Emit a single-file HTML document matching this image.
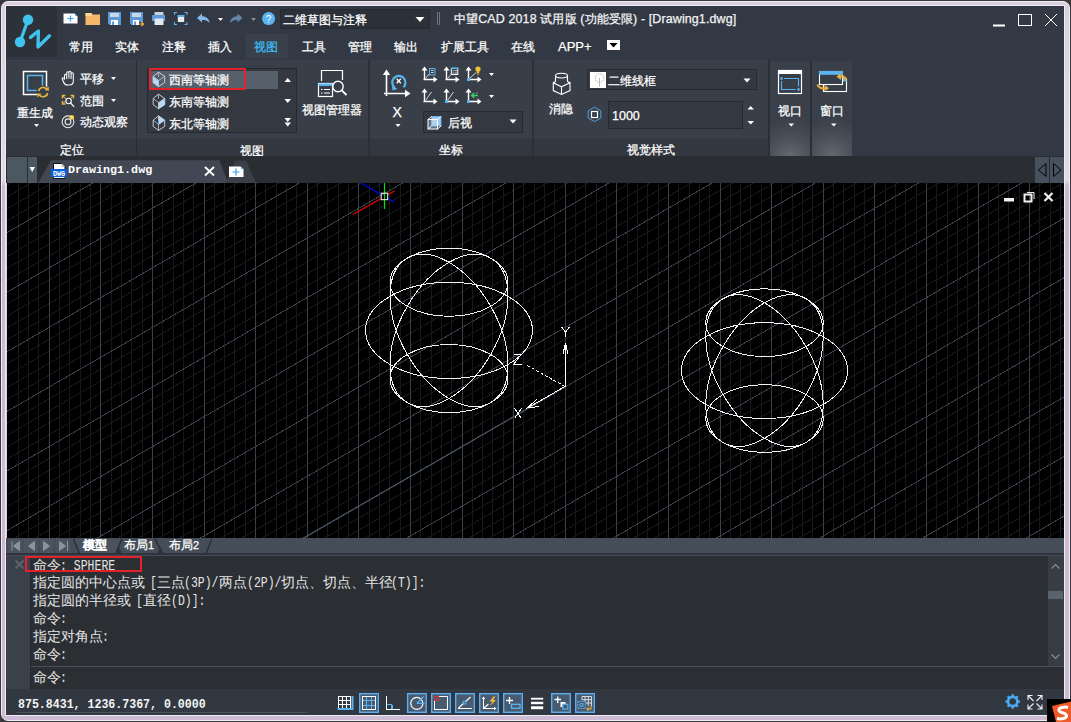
<!DOCTYPE html>
<html><head><meta charset="utf-8">
<style>
*{margin:0;padding:0;box-sizing:border-box}
html,body{width:1071px;height:722px;overflow:hidden;background:#1e1e22;font-family:"Liberation Sans",sans-serif;color:#fff;position:relative}
.a{position:absolute}
.t{position:absolute;white-space:nowrap;font-size:12px;line-height:14px;color:#fff;-webkit-text-stroke:0.25px currentColor}
svg{position:absolute;overflow:visible}
.m{font-family:"Liberation Mono",monospace}
</style></head><body>
<!-- frame -->
<div class="a" style="left:0;top:0;width:1071px;height:722px;background:#3a3a3e"></div>
<div class="a" style="left:1px;top:1px;width:1069px;height:720px;background:linear-gradient(#d9d1e0 0,#e2dbe8 178px,#cdb9d5 184px,#cdbad5 100%);border-radius:7px;border:1px solid #f2ecf4"></div>
<div class="a" style="left:5px;top:5px;width:1060px;height:711px;border:1px solid #f0eaf2"></div>
<div class="a" style="left:6px;top:6px;width:1058px;height:709px;background:#333944"></div>

<!-- ===== TITLE ROW ===== -->
<div class="a" style="left:6px;top:6px;width:51px;height:51px;background:#2d3139"></div>
<svg style="left:0;top:0" width="60" height="60">
  <g fill="#40c4ee" stroke="#40c4ee">
    <circle cx="28" cy="19.7" r="5.2" stroke="none"/>
    <circle cx="20" cy="42" r="5.2" stroke="none"/>
    <path d="M28 20 L20 42" stroke-width="3.2" fill="none"/>
    <path d="M30.5 37.4 L38.4 31 L38 47 L49.5 35.8" stroke-width="3.3" fill="none" stroke-linejoin="round" stroke-linecap="round"/>
  </g>
</svg>
<!-- QAT icons -->
<svg style="left:0;top:0" width="290" height="34">
  <path d="M63.5 13.5 H74.5 L77.5 16.5 V23.5 H63.5 Z" fill="#fff"/>
  <path d="M75 13.5 L77.5 16 L75 16 Z" fill="#5ab0f0"/>
  <path d="M70.5 15.5 V21.5 M67.5 18.5 H73.5" stroke="#3aa0ea" stroke-width="1.2"/>
  <path d="M85.5 13 H91.5 L92.5 14.5 H100 V25 H85.5 Z" fill="#f4b76c"/>
  <path d="M85.5 13 H91 L92 14.5 V16 H85.5 Z" fill="#f7d898"/>
  <path d="M108 12 H121 V25 H109.5 L108 23.5 Z" fill="#5d9ad6"/>
  <rect x="110" y="13" width="9" height="4" fill="#c8d7ea"/>
  <rect x="111" y="20" width="7" height="5" fill="#fff"/>
  <rect x="112" y="21.5" width="2" height="3.5" fill="#5d9ad6"/>
  <path d="M130 12 H143 V22 H139 V25 H131.5 L130 23.5 Z" fill="#5d9ad6"/>
  <rect x="132" y="13" width="9" height="4" fill="#c8d7ea"/>
  <rect x="133" y="20" width="6" height="5" fill="#fff"/>
  <rect x="134" y="21.5" width="2" height="3.5" fill="#5d9ad6"/>
  <path d="M138.5 24 H143.5 M141.5 22 L143.5 24 L141.5 26" stroke="#f0b040" stroke-width="1.2" fill="none"/>
  <rect x="154.5" y="12" width="9" height="3.5" fill="#c8d2dc"/>
  <rect x="152" y="15" width="13" height="6" fill="#5d9ad6"/>
  <rect x="154.5" y="18.5" width="9" height="6.5" fill="#e2e8f0"/>
  <path d="M174.5 15 V12.5 H177 M184.5 12.5 H187 V15 M187 22 V24.5 H184.5 M177 24.5 H174.5 V22" stroke="#5ab0f0" stroke-width="1.1" fill="none"/>
  <rect x="177.5" y="15" width="7" height="2" fill="#5ab0f0"/>
  <rect x="177.8" y="17" width="6.4" height="5" fill="#e6ecf2"/>
  <path d="M197 18 L202 13.5 V16.3 C206 16.3 209 18.5 209.5 23 C207.5 20.5 205 20 202 20 V22.5 Z" fill="#84b8e8"/>
  <path d="M218 18 H223 L220.5 21 Z" fill="#fff"/>
  <path d="M242.5 18 L237.5 13.5 V16.3 C233.5 16.3 230.5 18.5 230 23 C232 20.5 234.5 20 237.5 20 V22.5 Z" fill="#5f86ad"/>
  <path d="M251 18 H256 L253.5 21 Z" fill="#8a8f96"/>
  <circle cx="268.6" cy="18.6" r="6.5" fill="#5ab4f0"/>
  <text x="268.6" y="22.6" font-size="10" font-family="Liberation Sans" fill="#fff" text-anchor="middle">?</text>
</svg>
<div class="a" style="left:280px;top:9px;width:150px;height:20px;background:#2c3038;border:1px solid #262a31"></div>
<div class="t" style="left:283px;top:13px">二维草图与注释</div>
<svg style="left:0;top:0" width="440" height="30"><path d="M415.5 17 H424.5 L420 22 Z" fill="#fff"/></svg>
<div class="a" style="left:437px;top:12px;width:3px;height:13px;border:1px solid #70757c;border-radius:1px"></div>
<div class="t" style="left:454px;top:12px;font-size:12.45px;letter-spacing:0.13px;line-height:15px;color:#f4f4f4">中望CAD 2018 试用版 (功能受限) - [Drawing1.dwg]</div>
<svg style="left:0;top:0" width="1071" height="34">
  <rect x="993" y="24.5" width="12" height="2" fill="#fff"/>
  <rect x="1018.5" y="14.5" width="13" height="11" fill="none" stroke="#fff" stroke-width="1"/>
  <path d="M1045 14 L1057 26 M1057 14 L1045 26" stroke="#fff" stroke-width="1"/>
</svg>

<!-- ===== TABS ROW ===== -->
<div class="a" style="left:246px;top:34px;width:42px;height:24px;background:#39404a"></div>
<div class="t" style="left:69px;top:40px">常用</div>
<div class="t" style="left:115px;top:40px">实体</div>
<div class="t" style="left:162px;top:40px">注释</div>
<div class="t" style="left:208px;top:40px">插入</div>
<div class="t" style="left:254px;top:40px;color:#3ebdf2">视图</div>
<div class="t" style="left:302px;top:40px">工具</div>
<div class="t" style="left:348px;top:40px">管理</div>
<div class="t" style="left:394px;top:40px">输出</div>
<div class="t" style="left:441px;top:40px">扩展工具</div>
<div class="t" style="left:511px;top:40px">在线</div>
<div class="t" style="left:558px;top:40px;font-size:13px">APP+</div>
<div class="a" style="left:607px;top:40px;width:13px;height:10px;background:#fff"></div>
<svg style="left:0;top:0" width="630" height="60"><path d="M609.5 43 H617.5 L613.5 47.5 Z" fill="#000"/></svg>
<!-- ===== RIBBON ===== -->
<div class="a" style="left:6px;top:60px;width:763px;height:79px;background:#393f49"></div>
<div class="a" style="left:6px;top:139px;width:763px;height:17px;background:#323740"></div>
<div class="a" style="left:136px;top:60px;width:1px;height:96px;background:#2a2e34"></div>
<div class="a" style="left:368px;top:60px;width:2px;height:96px;background:#2c3037"></div>
<div class="a" style="left:532px;top:60px;width:2px;height:96px;background:#2c3037"></div>
<div class="a" style="left:770px;top:61px;width:40px;height:95px;background:radial-gradient(ellipse 40px 38px at 50% 100%,#636971 0,#4a5058 50%,#3a4049 100%)"></div>
<div class="a" style="left:812px;top:61px;width:40px;height:95px;background:radial-gradient(ellipse 40px 38px at 50% 100%,#636971 0,#4a5058 50%,#3a4049 100%)"></div>
<div class="a" style="left:810px;top:61px;width:2px;height:95px;background:#2b2f36"></div>
<div class="a" style="left:768px;top:60px;width:2px;height:96px;background:#2b2f36"></div>

<!-- panel 定位 -->
<svg style="left:0;top:0" width="140" height="160">
  <rect x="23.5" y="71.5" width="23" height="23" fill="none" stroke="#fff" stroke-width="1.5"/>
  <rect x="27.5" y="75.5" width="15" height="15" fill="none" stroke="#5ab4f0" stroke-width="1.5"/>
  <circle cx="43" cy="92" r="6.5" fill="#383e48"/>
  <path d="M38.6 91 A4.6 4.6 0 0 1 47 89.6" stroke="#e6b040" stroke-width="1.7" fill="none"/>
  <path d="M47.6 93 A4.6 4.6 0 0 1 39.2 94.6" stroke="#e6b040" stroke-width="1.7" fill="none"/>
  <path d="M44.5 90.2 L49 90.8 L48.6 86.5 Z" fill="#e6b040"/>
  <path d="M41.6 93.8 L37.2 93.2 L37.5 97.5 Z" fill="#e6b040"/>
  <path d="M34 124 H39 L36.5 127 Z" fill="#fff"/>
  <!-- hand -->
  <path d="M64.5 79.5 V75.5 Q64.5 74.3 65.6 74.3 Q66.7 74.3 66.7 75.5 V73 Q66.7 71.8 67.8 71.8 Q68.9 71.8 68.9 73 V72.5 Q68.9 71.3 70 71.3 Q71.1 71.3 71.1 72.5 V74 Q71.1 72.8 72.2 72.8 Q73.3 72.8 73.3 74 V81 Q73.3 85 69.5 85 H67.5 Q64.5 85 63.5 82 L62.3 79 Q62 77.8 63 77.8 Q63.8 77.8 64.5 79.5 Z M66.7 75.5 V79 M68.9 73 V78.5 M71.1 74 V79" fill="none" stroke="#fff" stroke-width="1.05"/>
  <path d="M111 77 H116 L113.5 80 Z" fill="#fff"/>
  <!-- zoom range -->
  <path d="M62.5 98.5 V95.5 H65.5 M73.5 98.5 V95.5 H70.5 M62.5 101 V104 H65.5" stroke="#e6b040" stroke-width="1.5" fill="none"/>
  <path d="M63 96 L66.5 99.5 M73 96 L70.5 98.5 M63 103.5 L66 100.5" stroke="#e6b040" stroke-width="1" fill="none"/>
  <circle cx="68.6" cy="101" r="2.7" fill="#383e48" stroke="#fff" stroke-width="1.1"/>
  <path d="M70.6 103 L74.2 106.8" stroke="#fff" stroke-width="1.2"/>
  <path d="M111 99 H116 L113.5 102 Z" fill="#fff"/>
  <!-- orbit -->
  <circle cx="68" cy="121.8" r="5.9" fill="none" stroke="#e8e8e8" stroke-width="1.1"/>
  <circle cx="68" cy="121.8" r="2.9" fill="none" stroke="#e8e8e8" stroke-width="1.1"/>
  <circle cx="71.7" cy="117.3" r="2.4" fill="#f5c84a"/><circle cx="71.9" cy="117" r="1" fill="#fae8a8"/>
</svg>
<div class="t" style="left:17px;top:105.5px">重生成</div>
<div class="t" style="left:80px;top:71.5px">平移</div>
<div class="t" style="left:80px;top:94px">范围</div>
<div class="t" style="left:80px;top:115px">动态观察</div>
<div class="t" style="left:60px;top:143px">定位</div>

<!-- panel 视图 -->
<div class="a" style="left:147px;top:68px;width:150px;height:65px;background:#333841;border:1px solid #262a30"></div>
<div class="a" style="left:150px;top:71px;width:128px;height:18px;background:#56606b"></div>
<div class="a" style="left:149px;top:68px;width:97px;height:22px;border:2px solid #e2222a"></div>
<svg style="left:0;top:0" width="380" height="160">
  <polygon points="153.2,76.4 158.5,80.6 158.5,86.6 153.2,82.6" fill="#b8d8f4" stroke="#5ab4f0" stroke-width="0.8"/><polygon points="158.5,72.1 164.7,76.4 164.7,82.6 158.5,86.6 153.2,82.6 153.2,76.4" fill="none" stroke="#d8dde2" stroke-width="0.9"/><path d="M153.2 76.4 L158.5 80.6 L164.7 76.4 M158.5 80.6 V86.6 M158.5 72.1 V76.69999999999999" fill="none" stroke="#c8cdd2" stroke-width="0.8"/>
  <polygon points="158.5,102.7 164.7,98.5 164.7,104.7 158.5,108.7" fill="#b8d8f4" stroke="#5ab4f0" stroke-width="0.8"/><polygon points="158.5,94.2 164.7,98.5 164.7,104.7 158.5,108.7 153.2,104.7 153.2,98.5" fill="none" stroke="#d8dde2" stroke-width="0.9"/><path d="M153.2 98.5 L158.5 102.7 L164.7 98.5 M158.5 102.7 V108.7 M158.5 94.2 V98.8" fill="none" stroke="#c8cdd2" stroke-width="0.8"/>
  <polygon points="158.5,115.9 164.7,120.2 158.5,124.4 158.5,120.5" fill="#b8d8f4" stroke="#5ab4f0" stroke-width="0.8"/><polygon points="158.5,115.9 164.7,120.2 164.7,126.4 158.5,130.4 153.2,126.4 153.2,120.2" fill="none" stroke="#d8dde2" stroke-width="0.9"/><path d="M153.2 120.2 L158.5 124.4 L164.7 120.2 M158.5 124.4 V130.4 M158.5 115.9 V120.5" fill="none" stroke="#c8cdd2" stroke-width="0.8"/>
  <path d="M284.5 82 H291 L287.7 78 Z M284.5 99 H291 L287.7 103 Z M284.5 118 H291 L287.7 122 Z M284.5 122.5 H291 L287.7 126.5 Z" fill="#fff"/>
  <!-- view manager icon -->
  <path d="M321.5 81 V70.5 H342.5 V80" fill="none" stroke="#fff" stroke-width="1.2"/>
  <rect x="318.5" y="83.5" width="14" height="13" fill="#383e48" stroke="#fff" stroke-width="1.2"/>
  <rect x="318.5" y="83.5" width="14" height="2.5" fill="#5ab4f0"/>
  <path d="M321 89.5 H322.5 M324 89.5 H330 M321 93 H322.5 M324 93 H330" stroke="#fff" stroke-width="1"/>
  <circle cx="338" cy="86.5" r="5.2" fill="#383e48" stroke="#fff" stroke-width="1.4"/>
  <path d="M341.8 90.3 L346.5 95" stroke="#fff" stroke-width="1.8"/>
</svg>
<div class="t" style="left:169px;top:73px">西南等轴测</div>
<div class="t" style="left:169px;top:95px">东南等轴测</div>
<div class="t" style="left:169px;top:117px">东北等轴测</div>
<div class="t" style="left:302px;top:102.5px">视图管理器</div>
<div class="t" style="left:240px;top:143.5px">视图</div>

<!-- panel 坐标 -->
<svg style="left:0;top:0" width="540" height="160">
<path d="M386.5 73 V96 M384 93.5 H406" stroke="#fff" stroke-width="1.6" fill="none"/><path d="M382.8 75 L386.5 69.5 L390.2 75 Z M405 89.8 L410.5 93.5 L405 97.2 Z" fill="#fff"/><path d="M394.5 87.5 A6.6 6.6 0 1 1 403.5 87.2" fill="none" stroke="#5ab4f0" stroke-width="2.2"/><path d="M392 85 L392.5 90.5 L397.5 89 Z" fill="#5ab4f0"/><path d="M396.7 78.8 L400.8 83.2 M400.8 78.8 L396.7 83.2" stroke="#fff" stroke-width="1.3"/><path d="M395.5 124 H400.5 L398 127 Z" fill="#fff"/><path d="M424.5 79.5 V69.5 M423.5 79.5 H434" stroke="#fff" stroke-width="1.4" fill="none"/><path d="M421.5 70.5 L424.5 66.5 L427.5 70.5 Z M433.5 76.5 L437.5 79.5 L433.5 82.5 Z" fill="#fff"/><path d="M425.5 78.5 L429 74" stroke="#e8e8e8" stroke-width="0.9" fill="none"/><rect x="429.5" y="68.5" width="5.5" height="6.5" fill="#3a4250" stroke="#5ab4f0" stroke-width="1"/><path d="M431 70.5 H433.5 M431 72.5 H433.5" stroke="#fff" stroke-width="0.8"/><path d="M446.5 79.5 V69.5 M445.5 79.5 H456" stroke="#fff" stroke-width="1.4" fill="none"/><path d="M443.5 70.5 L446.5 66.5 L449.5 70.5 Z M455.5 76.5 L459.5 79.5 L455.5 82.5 Z" fill="#fff"/><path d="M447.5 78.5 L451 74.5" stroke="#e8e8e8" stroke-width="0.9" fill="none"/><rect x="451.3" y="68.3" width="6.5" height="6.2" fill="#383e48" stroke="#fff" stroke-width="1"/><rect x="451" y="67.6" width="7.2" height="1.4" fill="#5ab4f0"/><rect x="452.5" y="70" width="1.4" height="1.4" fill="#5ab4f0"/><path d="M454.5 70.7 H457 M452.5 73 H453.9 M454.5 73 H457" stroke="#fff" stroke-width="0.8"/><path d="M468.5 79.5 V69.5 M467.5 79.5 H478" stroke="#fff" stroke-width="1.4" fill="none"/><path d="M465.5 70.5 L468.5 66.5 L471.5 70.5 Z M477.5 76.5 L481.5 79.5 L477.5 82.5 Z" fill="#fff"/><path d="M469.5 78.5 L476 72.5" stroke="#e8e8e8" stroke-width="0.9" fill="none"/><rect x="467" y="78" width="3" height="3" fill="#5ab4f0"/><circle cx="478" cy="69" r="2.6" fill="#f5c030"/><rect x="476.8" y="71" width="2.4" height="2" fill="#f5c030"/><rect x="476.8" y="73.5" width="2.4" height="1" fill="#f5c030"/><path d="M424.5 101.5 V91.5 M423.5 101.5 H434" stroke="#fff" stroke-width="1.4" fill="none"/><path d="M421.5 92.5 L424.5 88.5 L427.5 92.5 Z M433.5 98.5 L437.5 101.5 L433.5 104.5 Z" fill="#fff"/><path d="M425.5 100.5 L431.5 92" stroke="#e8e8e8" stroke-width="0.9" fill="none"/><path d="M446.5 101.5 V91.5 M445.5 101.5 H456" stroke="#fff" stroke-width="1.4" fill="none"/><path d="M443.5 92.5 L446.5 88.5 L449.5 92.5 Z M455.5 98.5 L459.5 101.5 L455.5 104.5 Z" fill="#fff"/><path d="M447.5 100.5 L453.5 92" stroke="#e8e8e8" stroke-width="0.9" fill="none"/><rect x="445" y="100" width="3" height="3" fill="#5ab4f0"/><path d="M468.5 101.5 V91.5 M467.5 101.5 H478" stroke="#fff" stroke-width="1.4" fill="none"/><path d="M465.5 92.5 L468.5 88.5 L471.5 92.5 Z M477.5 98.5 L481.5 101.5 L477.5 104.5 Z" fill="#fff"/><rect x="467" y="100" width="3" height="3" fill="#5ab4f0"/><path d="M477.9 95.4 H471.8 M474.2 93 L471.6 95.4 L474.2 97.8" stroke="#40d060" stroke-width="1.5" fill="none"/><path d="M476 94 L478 92" stroke="#ddd" stroke-width="0.8" stroke-dasharray="1 1"/><path d="M489 73 H494 L491.5 76 Z M489 95 H494 L491.5 98 Z" fill="#fff"/>
</svg>
<div class="a" style="left:423px;top:111px;width:100px;height:22px;background:#333841;border:1px solid #262a30"></div>
<svg style="left:0;top:0" width="540" height="160">
  <rect x="431.5" y="116.5" width="9.5" height="9.5" fill="#a9c9ea" stroke="#5ab4f0" stroke-width="1"/>
  <rect x="428" y="119.5" width="9.5" height="9.5" fill="rgba(200,220,240,0.35)" stroke="#fff" stroke-width="1"/>
  <path d="M428 119.5 L431.5 116.5 M437.5 119.5 L441 116.5 M437.5 129 L441 126 M428 129 L431.5 126" stroke="#fff" stroke-width="1" fill="none"/>
  <path d="M509.5 119.5 H516.5 L513 123.5 Z" fill="#fff"/>
</svg>
<div class="t" style="left:448px;top:116px">后视</div>
<div class="t" style="left:392.5px;top:104px;font-size:14px;line-height:16px">X</div>
<div class="t" style="left:439px;top:142.5px">坐标</div>

<!-- panel 视觉样式 -->
<svg style="left:0;top:0" width="770" height="160">
  <ellipse cx="561.5" cy="75.6" rx="6" ry="2.4" fill="none" stroke="#fff" stroke-width="1.1"/>
  <path d="M555.5 75.6 V81.5 M567.5 75.6 V81.5 M555.5 81.5 L553.3 82.7 V90.6 L561.5 94.5 L570 90.6 V82.7 L567.5 81.5 M553.3 82.7 L561.5 86.8 L570 82.7 M561.5 86.8 V94.5" fill="none" stroke="#fff" stroke-width="1.1"/>
</svg>
<div class="t" style="left:549px;top:101.5px">消隐</div>
<div class="a" style="left:587px;top:69px;width:170px;height:21px;background:#333841;border:1px solid #262a30"></div>
<div class="a" style="left:590px;top:72px;width:16px;height:16px;background:#fff"></div>
<svg style="left:0;top:0" width="770" height="160">
  <circle cx="599.5" cy="78" r="4.3" fill="none" stroke="#888" stroke-width="0.7" stroke-dasharray="1.2 0.8"/>
  <path d="M599.5 78 V86.5" stroke="#999" stroke-width="0.7"/>
  <path d="M743.5 78.5 H750.5 L747 82.5 Z" fill="#fff"/>
  <path d="M591.5 112 L594.5 107.5 L598.5 108 L601.5 112 L601 116.5 L597.5 121.5 L592 121 L588 117 Z" fill="none"/>
  <polygon points="597.4,107.5 601.7,109.8 601.7,119.2 597.4,121.5 591.6,121.5 587.3,119.2 587.3,109.8 591.6,107.5" fill="none"/>
  <polygon points="594.5,107.2 600.8,110.8 600.8,118 594.5,121.6 588.2,118 588.2,110.8" fill="none" stroke="#4aa0e0" stroke-width="1"/>
  <rect x="591.5" y="111.5" width="6" height="6" fill="none" stroke="#fff" stroke-width="1.2"/>
  <path d="M747.5 109.5 H754 L750.7 106 Z M747.5 121 H754 L750.7 124.5 Z" fill="#fff"/>
</svg>
<div class="t" style="left:608px;top:74px">二维线框</div>
<div class="a" style="left:608px;top:101px;width:135px;height:28px;background:#333841;border:1px solid #262a30"></div>
<div class="t" style="left:612px;top:109px;font-size:12.5px">1000</div>
<div class="t" style="left:627px;top:143px">视觉样式</div>

<!-- 视口 / 窗口 -->
<svg style="left:0;top:0" width="860" height="160">
  <rect x="778.5" y="70.5" width="23" height="23" fill="#383e48" stroke="#fff" stroke-width="1.2"/>
  <rect x="778" y="70" width="24" height="4" fill="#fff"/>
  <path d="M784 78.5 H798.5 V86.5 M781.5 81 V89.5 H795.5" fill="none" stroke="#5ab4f0" stroke-width="1.1"/>
  <rect x="780.3" y="77.3" width="2.4" height="2.4" fill="#5ab4f0"/>
  <rect x="797.3" y="88.3" width="2.4" height="2.4" fill="#5ab4f0"/>
  <rect x="823.5" y="78.5" width="23" height="13" fill="#383e48" stroke="#fff" stroke-width="1.1"/>
  <rect x="843" y="78" width="4" height="3.5" fill="#5ab4f0"/>
  <rect x="819.5" y="71.5" width="23" height="13" fill="#383e48" stroke="#fff" stroke-width="1.1"/>
  <rect x="819" y="71" width="24" height="3.8" fill="#5ab4f0"/>
  <path d="M846.5 80.5 C845.5 77.5 843.5 76 839.5 76.5" stroke="#e8b040" stroke-width="2.2" fill="none"/>
  <path d="M836.5 76.8 L840.5 73 L841 80 Z" fill="#e8b040"/>
  <path d="M817.5 84.5 C818.5 87.5 820.5 88.8 825 88.5" stroke="#e8b040" stroke-width="2.2" fill="none"/>
  <path d="M829 88.3 L824.5 84.8 L824.5 91.5 Z" fill="#e8b040"/>
  <path d="M788.5 123.5 H794 L791.3 126.5 Z M831 123.5 H836.5 L833.8 126.5 Z" fill="#fff"/>
</svg>
<div class="t" style="left:778px;top:104px">视口</div>
<div class="t" style="left:820px;top:104px">窗口</div>
<!-- doc tab bar -->
<div class="a" style="left:6px;top:156px;width:1058px;height:27px;background:#2a2d32"></div>
<div class="a" style="left:7px;top:157px;width:20px;height:26px;background:#4c5861"></div>
<div class="a" style="left:28px;top:157px;width:9px;height:26px;background:#4c5861"></div>
<svg style="left:0;top:0" width="270" height="190">
  <path d="M29.5 167 H35 L32.2 172 Z" fill="#fff"/>
  <path d="M38 183 L51 160.2 H219.5 L228 183 Z" fill="#424853"/>
  <path d="M226 183 L235 160.5 H246 L256 183 Z" fill="#3a3f48"/>
  <!-- dwg icon -->
  <path d="M53.5 163.5 H62 L65 166.5 V178.5 H53.5 Z" fill="#fff" stroke="#111" stroke-width="1"/>
  <path d="M62 163.5 V166.5 H65" fill="#ccc" stroke="#999" stroke-width="0.6"/>
  <rect x="51" y="169" width="16" height="8" fill="#0a5ee0"/>
  <text x="59" y="175.8" font-size="6.8" font-family="Liberation Mono" fill="#fff" text-anchor="middle" font-weight="bold">DWG</text>
  <path d="M205 167 L214 175.5 M214 167 L205 175.5" stroke="#fff" stroke-width="1.8"/>
  <path d="M229 166.5 H240.5 L243.5 169.5 V177 H229 Z" fill="#fff"/>
  <path d="M236 168.5 V175.5 M232.5 172 H239.5" stroke="#3aa0ea" stroke-width="1.2"/>
  <path d="M241 166.5 L243.5 169 H241 Z" fill="#5ab0f0"/>
</svg>
<div class="t m" style="left:68px;top:163px;font-size:11.7px;font-weight:bold;letter-spacing:0px;-webkit-text-stroke:0">Drawing1.dwg</div>
<div class="a" style="left:1035px;top:157px;width:14px;height:26px;background:#47515e"></div>
<div class="a" style="left:1050px;top:157px;width:14px;height:26px;background:#47515e"></div>
<svg style="left:0;top:0" width="1071" height="190">
  <path d="M1046 163.5 L1038.5 170 L1046 176.5 Z M1053.5 163.5 L1061 170 L1053.5 176.5 Z" fill="none" stroke="#000" stroke-width="1"/>
</svg>
<div class="a" style="left:6px;top:183px;width:1058px;height:355px;background:#000;overflow:hidden"></div><svg style="left:6px;top:183px;overflow:hidden" width="1058" height="355" viewBox="0 0 1058 355">
<path d="M12.5 0V355M22.5 0V355M32.5 0V355M53.5 0V355M63.5 0V355M74.5 0V355M84.5 0V355M105.5 0V355M115.5 0V355M125.5 0V355M136.5 0V355M156.5 0V355M167.5 0V355M177.5 0V355M187.5 0V355M208.5 0V355M218.5 0V355M228.5 0V355M239.5 0V355M259.5 0V355M270.5 0V355M280.5 0V355M290.5 0V355M311.5 0V355M321.5 0V355M332.5 0V355M342.5 0V355M363.5 0V355M373.5 0V355M383.5 0V355M394.5 0V355M414.5 0V355M425.5 0V355M435.5 0V355M445.5 0V355M466.5 0V355M476.5 0V355M486.5 0V355M497.5 0V355M517.5 0V355M528.5 0V355M538.5 0V355M548.5 0V355M569.5 0V355M579.5 0V355M590.5 0V355M600.5 0V355M621.5 0V355M631.5 0V355M641.5 0V355M652.5 0V355M672.5 0V355M683.5 0V355M693.5 0V355M703.5 0V355M724.5 0V355M734.5 0V355M744.5 0V355M755.5 0V355M775.5 0V355M786.5 0V355M796.5 0V355M806.5 0V355M827.5 0V355M837.5 0V355M848.5 0V355M858.5 0V355M879.5 0V355M889.5 0V355M899.5 0V355M910.5 0V355M930.5 0V355M941.5 0V355M951.5 0V355M961.5 0V355M982.5 0V355M992.5 0V355M1002.5 0V355M1013.5 0V355M1033.5 0V355M1044.5 0V355M1054.5 0V355M0 -33.22L1058 -644.06M0 -21.31L1058 -632.14M0 2.53L1058 -608.31M0 14.44L1058 -596.39M0 26.36L1058 -584.48M0 38.28L1058 -572.56M0 62.11L1058 -548.73M0 74.03L1058 -536.81M0 85.94L1058 -524.89M0 97.86L1058 -512.98M0 121.69L1058 -489.14M0 133.61L1058 -477.23M0 145.53L1058 -465.31M0 157.44L1058 -453.39M0 181.28L1058 -429.56M0 193.19L1058 -417.64M0 205.11L1058 -405.73M0 217.03L1058 -393.81M0 240.86L1058 -369.98M0 252.77L1058 -358.06M0 264.69L1058 -346.15M0 276.61L1058 -334.23M0 300.44L1058 -310.40M0 312.36L1058 -298.48M0 324.27L1058 -286.56M0 336.19L1058 -274.65M0 360.02L1058 -250.81M0 371.94L1058 -238.90M0 383.86L1058 -226.98M0 395.77L1058 -215.06M0 419.61L1058 -191.23M0 431.52L1058 -179.31M0 443.44L1058 -167.40M0 455.36L1058 -155.48M0 479.19L1058 -131.65M0 491.10L1058 -119.73M0 503.02L1058 -107.82M0 514.94L1058 -95.90M0 538.77L1058 -72.07M0 550.69L1058 -60.15M0 562.60L1058 -48.23M0 574.52L1058 -36.32M0 598.35L1058 -12.48M0 610.27L1058 -0.57M0 622.19L1058 11.35M0 634.10L1058 23.27M0 657.94L1058 47.10M0 669.85L1058 59.02M0 681.77L1058 70.93M0 693.69L1058 82.85M0 717.52L1058 106.68M0 729.43L1058 118.60M0 741.35L1058 130.51M0 753.27L1058 142.43M0 777.10L1058 166.26M0 789.02L1058 178.18M0 800.93L1058 190.10M0 812.85L1058 202.01M0 836.68L1058 225.85M0 848.60L1058 237.76M0 860.52L1058 249.68M0 872.43L1058 261.60M0 896.27L1058 285.43M0 908.18L1058 297.35M0 920.10L1058 309.26M0 932.02L1058 321.18M0 955.85L1058 345.01M0 967.77L1058 356.93M0 979.68L1058 368.85M0 991.60L1058 380.76" stroke="#16191c" stroke-width="1" fill="none" shape-rendering="crispEdges"/>
<path d="M43.5 0V355M94.5 0V355M146.5 0V355M198.5 0V355M249.5 0V355M301.5 0V355M352.5 0V355M404.5 0V355M456.5 0V355M507.5 0V355M559.5 0V355M610.5 0V355M662.5 0V355M714.5 0V355M765.5 0V355M817.5 0V355M868.5 0V355M920.5 0V355M972.5 0V355M1023.5 0V355M0 -9.39L1058 -620.23M0 50.19L1058 -560.64M0 109.78L1058 -501.06M0 169.36L1058 -441.48M0 228.94L1058 -381.90M0 288.52L1058 -322.31M0 348.11L1058 -262.73M0 407.69L1058 -203.15M0 467.27L1058 -143.56M0 526.85L1058 -83.98M0 586.44L1058 -24.40M0 646.02L1058 35.18M0 705.60L1058 94.77M0 765.18L1058 154.35M0 824.77L1058 213.93M0 884.35L1058 273.51M0 943.93L1058 333.10" stroke="#3a4049" stroke-width="1" fill="none" shape-rendering="crispEdges"/>
<path d="M559.20 204.00L0 526.85" stroke="#4d5562" stroke-width="1.2" fill="none"/>
</svg><div class="a" style="left:6px;top:183px;width:1px;height:355px;background:#d9c8de"></div><svg style="left:0;top:0" width="1071" height="722">
<g fill="none" stroke="#f2f2f2" stroke-width="1" shape-rendering="crispEdges"><ellipse cx="449" cy="330.4" rx="83.4" ry="48.15"/><ellipse cx="449" cy="282.25" rx="58.97" ry="34.05"/><ellipse cx="449" cy="378.55" rx="58.97" ry="34.05"/><ellipse cx="449" cy="330.4" rx="83.4" ry="48.15" transform="rotate(60 449 330.4)"/><ellipse cx="449" cy="330.4" rx="83.4" ry="48.15" transform="rotate(-60 449 330.4)"/><ellipse cx="764.5" cy="370.6" rx="83.0" ry="47.92"/><ellipse cx="764.5" cy="322.68" rx="58.69" ry="33.88"/><ellipse cx="764.5" cy="418.52" rx="58.69" ry="33.88"/><ellipse cx="764.5" cy="370.6" rx="83.0" ry="47.92" transform="rotate(60 764.5 370.6)"/><ellipse cx="764.5" cy="370.6" rx="83.0" ry="47.92" transform="rotate(-60 764.5 370.6)"/></g>
</svg><svg style="left:0;top:0" width="1071" height="722">
  <!-- drawing window controls -->
  <rect x="1004" y="198" width="10" height="3.5" fill="#f0f0f0"/>
  <rect x="1024.5" y="194.5" width="7" height="7" fill="none" stroke="#f0f0f0" stroke-width="2"/>
  <path d="M1027 192.5 H1034 V199" fill="none" stroke="#f0f0f0" stroke-width="1"/>
  <path d="M1044.5 193 L1052.5 201 M1052.5 193 L1044.5 201" stroke="#f0f0f0" stroke-width="2.2"/>
  <!-- cursor -->
  <path d="M384.5 183 V209" stroke="#00e000" stroke-width="1.2"/>
  <path d="M353 214.5 L381 198.5 M388 194.5 L394.5 191" stroke="#f00000" stroke-width="1.3"/>
  <path d="M361.5 183.3 L381 194.5 M388 198.5 L394.5 201.8" stroke="#0000f0" stroke-width="1.3"/>
  <rect x="381.2" y="193.2" width="6.5" height="6.5" fill="none" stroke="#fff" stroke-width="1"/>
  <!-- UCS icon -->
  <g stroke="#fff" stroke-width="1" fill="none" shape-rendering="crispEdges">
    <path d="M565.5 386.5 V343"/>
    <path d="M565 386.5 L527.5 408"/>
    <path d="M565 386.5 L526.5 365" stroke-dasharray="3 2"/>
    <path d="M563 354 L565.5 343 L568 354"/>
    <path d="M537.5 398.5 L527.5 408 L539 406.5"/>
    <path d="M561.5 327 L565.5 332 L569.5 327 M565.5 332 V337"/>
    <path d="M514.5 408.5 L521.5 418.5 M521.5 408.5 L514.5 418.5"/>
    <path d="M513.5 354.5 H521 L513.5 364.5 H521.5"/>
  </g>
</svg>
<!-- layout tabs -->
<div class="a" style="left:6px;top:538px;width:1058px;height:15px;background:#454d59"></div>
<div class="a" style="left:8px;top:539px;width:14px;height:14px;background:#4b535f"></div>
<div class="a" style="left:24px;top:539px;width:14px;height:14px;background:#4b535f"></div>
<div class="a" style="left:40px;top:539px;width:13px;height:14px;background:#4b535f"></div>
<div class="a" style="left:56px;top:539px;width:14px;height:14px;background:#4b535f"></div>
<svg style="left:0;top:0" width="300" height="722">
  <path d="M12 541 V551 M19.5 541.5 L13.5 546 L19.5 550.5 Z M34.5 541.5 L28.5 546 L34.5 550.5 Z M43.5 541.5 L49.5 546 L43.5 550.5 Z M59.5 541.5 L65.5 546 L59.5 550.5 Z M67.5 541 V551" fill="#8c939b" stroke="#8c939b" stroke-width="1"/>
  <path d="M73.6 539 L79.5 553 H115.8 L121.7 539 Z" fill="#4a525e"/>
  <path d="M73.6 539 L79.5 553.5 M115.8 553.5 L121.7 539 M155 539 L162.9 553.5 M206 553.5 L211.9 539" stroke="#262a30" stroke-width="1.2" fill="none"/>
  <path d="M115.8 553.5 L118.7 546 L121.6 553.5 Z M157.5 553.5 L160 547 L162.9 553.5 Z" fill="#2e333a"/>
</svg>
<div class="t" style="left:83px;top:538px;font-weight:bold;font-size:12px">模型</div>
<div class="t" style="left:124px;top:538px;font-size:12px">布局<span style="font-size:11px">1</span></div>
<div class="t" style="left:169px;top:538px;font-size:12px">布局<span style="font-size:11px">2</span></div>

<!-- command history -->
<div class="a" style="left:6px;top:553px;width:1058px;height:136px;background:#2b2e33"></div>
<div class="a" style="left:6px;top:556px;width:24px;height:133px;background:#3a414b"></div>
<div class="a" style="left:30px;top:556px;width:1px;height:133px;background:#262a2f"></div>
<div class="a" style="left:6px;top:553px;width:1058px;height:2px;background:#2f343c"></div>
<div class="a" style="left:6px;top:555px;width:1058px;height:1px;background:#454c57"></div>
<svg style="left:0;top:0" width="40" height="722">
  <path d="M15.5 560.5 L23.5 568.5 M23.5 560.5 L15.5 568.5" stroke="#5d636b" stroke-width="1.8"/>
</svg>
<div class="a" style="left:1048px;top:556px;width:16px;height:110px;background:#383d44"></div>
<div class="a" style="left:1048px;top:591px;width:15px;height:8px;background:#5a626c"></div>
<svg style="left:0;top:0" width="1071" height="722">
  <path d="M1051.5 568.5 L1055.5 564.5 L1059.5 568.5 M1051.5 654.5 L1055.5 658.5 L1059.5 654.5" fill="none" stroke="#8a9098" stroke-width="1.1"/>
</svg>
<div class="a" style="left:31px;top:666px;width:1033px;height:1px;background:#4c525a"></div>
<div class="t m" style="left:32.7px;top:558.0px;line-height:16px;color:#e6e6e6;-webkit-text-stroke:0"><span style="display:inline-block;width:27.6px;font-size:13.5px;vertical-align:top;font-family:Liberation Sans,sans-serif">命令</span><span style="display:inline-block;width:55.2px;vertical-align:top;overflow:visible"><span style="display:inline-block;font-size:14px;transform:scaleX(0.821);transform-origin:0 0">:&nbsp;SPHERE</span></span></div>
<div class="t m" style="left:32.7px;top:575.4px;line-height:16px;color:#e6e6e6;-webkit-text-stroke:0"><span style="display:inline-block;width:110.4px;font-size:13.5px;vertical-align:top;font-family:Liberation Sans,sans-serif">指定圆的中心点或</span><span style="display:inline-block;width:13.8px;vertical-align:top;overflow:visible"><span style="display:inline-block;font-size:14px;transform:scaleX(0.821);transform-origin:0 0">&nbsp;[</span></span><span style="display:inline-block;width:27.6px;font-size:13.5px;vertical-align:top;font-family:Liberation Sans,sans-serif">三点</span><span style="display:inline-block;width:34.5px;vertical-align:top;overflow:visible"><span style="display:inline-block;font-size:14px;transform:scaleX(0.821);transform-origin:0 0">(3P)/</span></span><span style="display:inline-block;width:27.6px;font-size:13.5px;vertical-align:top;font-family:Liberation Sans,sans-serif">两点</span><span style="display:inline-block;width:34.5px;vertical-align:top;overflow:visible"><span style="display:inline-block;font-size:14px;transform:scaleX(0.821);transform-origin:0 0">(2P)/</span></span><span style="display:inline-block;width:110.4px;font-size:13.5px;vertical-align:top;font-family:Liberation Sans,sans-serif">切点、切点、半径</span><span style="display:inline-block;width:34.5px;vertical-align:top;overflow:visible"><span style="display:inline-block;font-size:14px;transform:scaleX(0.821);transform-origin:0 0">(T)]:</span></span></div>
<div class="t m" style="left:32.7px;top:592.8px;line-height:16px;color:#e6e6e6;-webkit-text-stroke:0"><span style="display:inline-block;width:96.6px;font-size:13.5px;vertical-align:top;font-family:Liberation Sans,sans-serif">指定圆的半径或</span><span style="display:inline-block;width:13.8px;vertical-align:top;overflow:visible"><span style="display:inline-block;font-size:14px;transform:scaleX(0.821);transform-origin:0 0">&nbsp;[</span></span><span style="display:inline-block;width:27.6px;font-size:13.5px;vertical-align:top;font-family:Liberation Sans,sans-serif">直径</span><span style="display:inline-block;width:34.5px;vertical-align:top;overflow:visible"><span style="display:inline-block;font-size:14px;transform:scaleX(0.821);transform-origin:0 0">(D)]:</span></span></div>
<div class="t m" style="left:32.7px;top:610.8px;line-height:16px;color:#e6e6e6;-webkit-text-stroke:0"><span style="display:inline-block;width:27.6px;font-size:13.5px;vertical-align:top;font-family:Liberation Sans,sans-serif">命令</span><span style="display:inline-block;width:6.9px;vertical-align:top;overflow:visible"><span style="display:inline-block;font-size:14px;transform:scaleX(0.821);transform-origin:0 0">:</span></span></div>
<div class="t m" style="left:32.7px;top:628.8px;line-height:16px;color:#e6e6e6;-webkit-text-stroke:0"><span style="display:inline-block;width:69.0px;font-size:13.5px;vertical-align:top;font-family:Liberation Sans,sans-serif">指定对角点</span><span style="display:inline-block;width:6.9px;vertical-align:top;overflow:visible"><span style="display:inline-block;font-size:14px;transform:scaleX(0.821);transform-origin:0 0">:</span></span></div>
<div class="t m" style="left:32.7px;top:646.8px;line-height:16px;color:#e6e6e6;-webkit-text-stroke:0"><span style="display:inline-block;width:27.6px;font-size:13.5px;vertical-align:top;font-family:Liberation Sans,sans-serif">命令</span><span style="display:inline-block;width:6.9px;vertical-align:top;overflow:visible"><span style="display:inline-block;font-size:14px;transform:scaleX(0.821);transform-origin:0 0">:</span></span></div>
<div class="t m" style="left:32.7px;top:670.0px;line-height:16px;color:#e6e6e6;-webkit-text-stroke:0"><span style="display:inline-block;width:27.6px;font-size:13.5px;vertical-align:top;font-family:Liberation Sans,sans-serif">命令</span><span style="display:inline-block;width:6.9px;vertical-align:top;overflow:visible"><span style="display:inline-block;font-size:14px;transform:scaleX(0.821);transform-origin:0 0">:</span></span></div>
<div class="a" style="left:25px;top:556px;width:117px;height:16px;border:2px solid #e2222a"></div>
<div class="a" style="left:6px;top:689px;width:1058px;height:26px;background:#323842"></div>
<div class="t m" style="left:18.3px;top:696.5px;font-size:13.5px;line-height:16px;font-weight:bold;color:#f4f4f4;-webkit-text-stroke:0;transform:scaleX(0.858);transform-origin:0 0">875.8431,&nbsp;1236.7367,&nbsp;0.0000</div>
<div class="a" style="left:17px;top:712px;width:290px;height:1px;background:#4a5058"></div>
<svg style="left:0;top:0" width="1071" height="722">
  <!-- 1 grid -->
  <g stroke="#fff" stroke-width="1.1" fill="none" shape-rendering="crispEdges">
    <path d="M338 696.5 H350.5 M338 700.5 H350.5 M338 704.5 H350.5 M338 708.5 H350.5 M338.5 696 V709 M342.5 696 V709 M346.5 696 V709 M350.5 696 V709"/>
  </g>
  <path d="M337.5 709 H352.5 V696" stroke="#5ab4f0" stroke-width="2" fill="none"/>
  <!-- boxed buttons -->
  <g fill="#485a70" stroke="#5aaef0" stroke-width="1.4">
    <rect x="359.7" y="693.7" width="18.6" height="18.6"/>
    <rect x="407.6" y="693.7" width="18.6" height="18.6"/>
    <rect x="431.7" y="693.7" width="18.6" height="18.6"/>
    <rect x="455.7" y="693.7" width="18.6" height="18.6"/>
    <rect x="479.7" y="693.7" width="18.6" height="18.6"/>
    <rect x="503.7" y="693.7" width="18.6" height="18.6"/>
    <rect x="551.7" y="693.7" width="18.6" height="18.6"/>
    <rect x="575.7" y="693.7" width="18.6" height="18.6"/>
  </g>
  <!-- 2 snap grid -->
  <path d="M366.5 697 V709 M371.5 697 V709 M363 700.5 H375 M363 705.5 H375" stroke="#5ab4f0" stroke-width="1.1" shape-rendering="crispEdges"/>
  <rect x="362.5" y="696.5" width="13" height="13" fill="none" stroke="#fff" stroke-width="1.1" shape-rendering="crispEdges"/>
  <!-- 3 ortho -->
  <path d="M392 704.5 V709 M387 704.5 H392" stroke="#5ab4f0" stroke-width="1.1" fill="none" shape-rendering="crispEdges"/>
  <path d="M386.5 696 V709.5 H400" stroke="#fff" stroke-width="1.2" fill="none" shape-rendering="crispEdges"/>
  <!-- 4 polar -->
  <circle cx="416.8" cy="703.4" r="6" fill="none" stroke="#fff" stroke-width="1.2"/>
  <path d="M416.8 703.4 H424.5 M416.8 703.4 L423.5 696.5" stroke="#5ab4f0" stroke-width="1.2"/>
  <!-- 5 osnap -->
  <rect x="434.5" y="696.5" width="13" height="13" fill="none" stroke="#fff" stroke-width="1.2" shape-rendering="crispEdges"/>
  <rect x="434.5" y="696.5" width="4" height="4" fill="#485a70" stroke="#e53030" stroke-width="1.2" shape-rendering="crispEdges"/>
  <!-- 6 otrack -->
  <path d="M458 708.5 H472 M458.5 708 L470.5 697" stroke="#fff" stroke-width="1.1" fill="none"/>
  <rect x="463.3" y="701.3" width="2.6" height="2.6" fill="#485a70" stroke="#5ab4f0" stroke-width="1"/>
  <!-- 7 ducs -->
  <path d="M483.5 697 V708.5 H496 M484 708 L488.5 704" stroke="#fff" stroke-width="1.1" fill="none"/>
  <path d="M481.8 699 L483.5 696.5 L485.2 699 Z M494 706.8 L496.5 708.5 L494 710.2 Z" fill="#fff"/>
  <path d="M493.5 696.5 L489.5 701.5 H492.5 L490 706 L496 700 H493 L495.5 696.5 Z" fill="#f5c030"/>
  <!-- 8 dyn -->
  <path d="M506 700.5 H513 M509.5 697 V704" stroke="#fff" stroke-width="1.3"/>
  <rect x="511.5" y="704.3" width="8.5" height="4" fill="none" stroke="#5ab4f0" stroke-width="1.3"/>
  <!-- 9 lineweight -->
  <rect x="531" y="697.8" width="12.2" height="1.8" fill="#fff"/>
  <rect x="531" y="701.8" width="12.2" height="2.4" fill="#fff"/>
  <rect x="531" y="706.3" width="12.2" height="2.9" fill="#fff"/>
  <!-- 10 -->
  <path d="M554.5 699.5 H561 M557.7 696.5 V703" stroke="#fff" stroke-width="1.3"/>
  <rect x="560.5" y="702" width="5" height="5" fill="#fff"/>
  <rect x="562.8" y="704.3" width="5" height="4.8" fill="#485a70" stroke="#5ab4f0" stroke-width="1.1"/>
  <!-- 11 -->
  <g stroke="#e6e6e6" stroke-width="0.9" fill="none">
    <path d="M582 696.5 H591.5 V706 M585 696.5 V703 M588.3 696.5 V706 M582 699.7 H591.5 M582 703 H591.5 M582 696.5 V700"/>
  </g>
  <rect x="577.8" y="701.5" width="7.5" height="7" fill="#485a70" stroke="#5ab4f0" stroke-width="1" stroke-dasharray="1.5 1"/>
  <rect x="580" y="703.7" width="3" height="2.6" fill="none" stroke="#5ab4f0" stroke-width="0.9"/>
  <path d="M591 705.5 V709 H587 M588.5 707.5 L587 709 L588.5 710.5" stroke="#e8b040" stroke-width="1.1" fill="none"/>
  <!-- gear -->
  <g transform="translate(1012.7 701.5)">
    <circle r="4.6" fill="none" stroke="#4aaaf0" stroke-width="2.6"/>
    <g stroke="#4aaaf0" stroke-width="2.3">
      <path d="M0 -7.2 V-4.5 M0 7.2 V4.5 M-7.2 0 H-4.5 M7.2 0 H4.5 M-5.1 -5.1 L-3.2 -3.2 M5.1 5.1 L3.2 3.2 M-5.1 5.1 L-3.2 3.2 M5.1 -5.1 L3.2 -3.2"/>
    </g>
  </g>
  <!-- expand -->
  <g stroke="#f2f2f2" stroke-width="1.1" fill="none">
    <path d="M1028 700 V695.5 H1032.5 M1028 695.5 L1033.5 701 M1042 700 V695.5 H1037.5 M1042 695.5 L1036.5 701 M1028 704.5 V709 H1032.5 M1028 709 L1033.5 703.5 M1042 704.5 V709 H1037.5 M1042 709 L1036.5 703.5"/>
  </g>
</svg>
<!-- sogou -->
<div class="a" style="left:1047px;top:699px;width:24px;height:23px;background:#000"></div>
<svg style="left:0;top:0" width="1071" height="722">
  <path d="M1052 706 L1071 701.5 V722 H1056 Z" fill="#ee5a28"/>
  <path d="M1068 707.5 C1064 706.5 1058.5 707.5 1059 710.5 C1059.5 713 1066 712.5 1066.5 715.5 C1067 718.5 1061 719.5 1057 718.5" stroke="#fff" stroke-width="3" fill="none"/>
</svg>
</body></html>
